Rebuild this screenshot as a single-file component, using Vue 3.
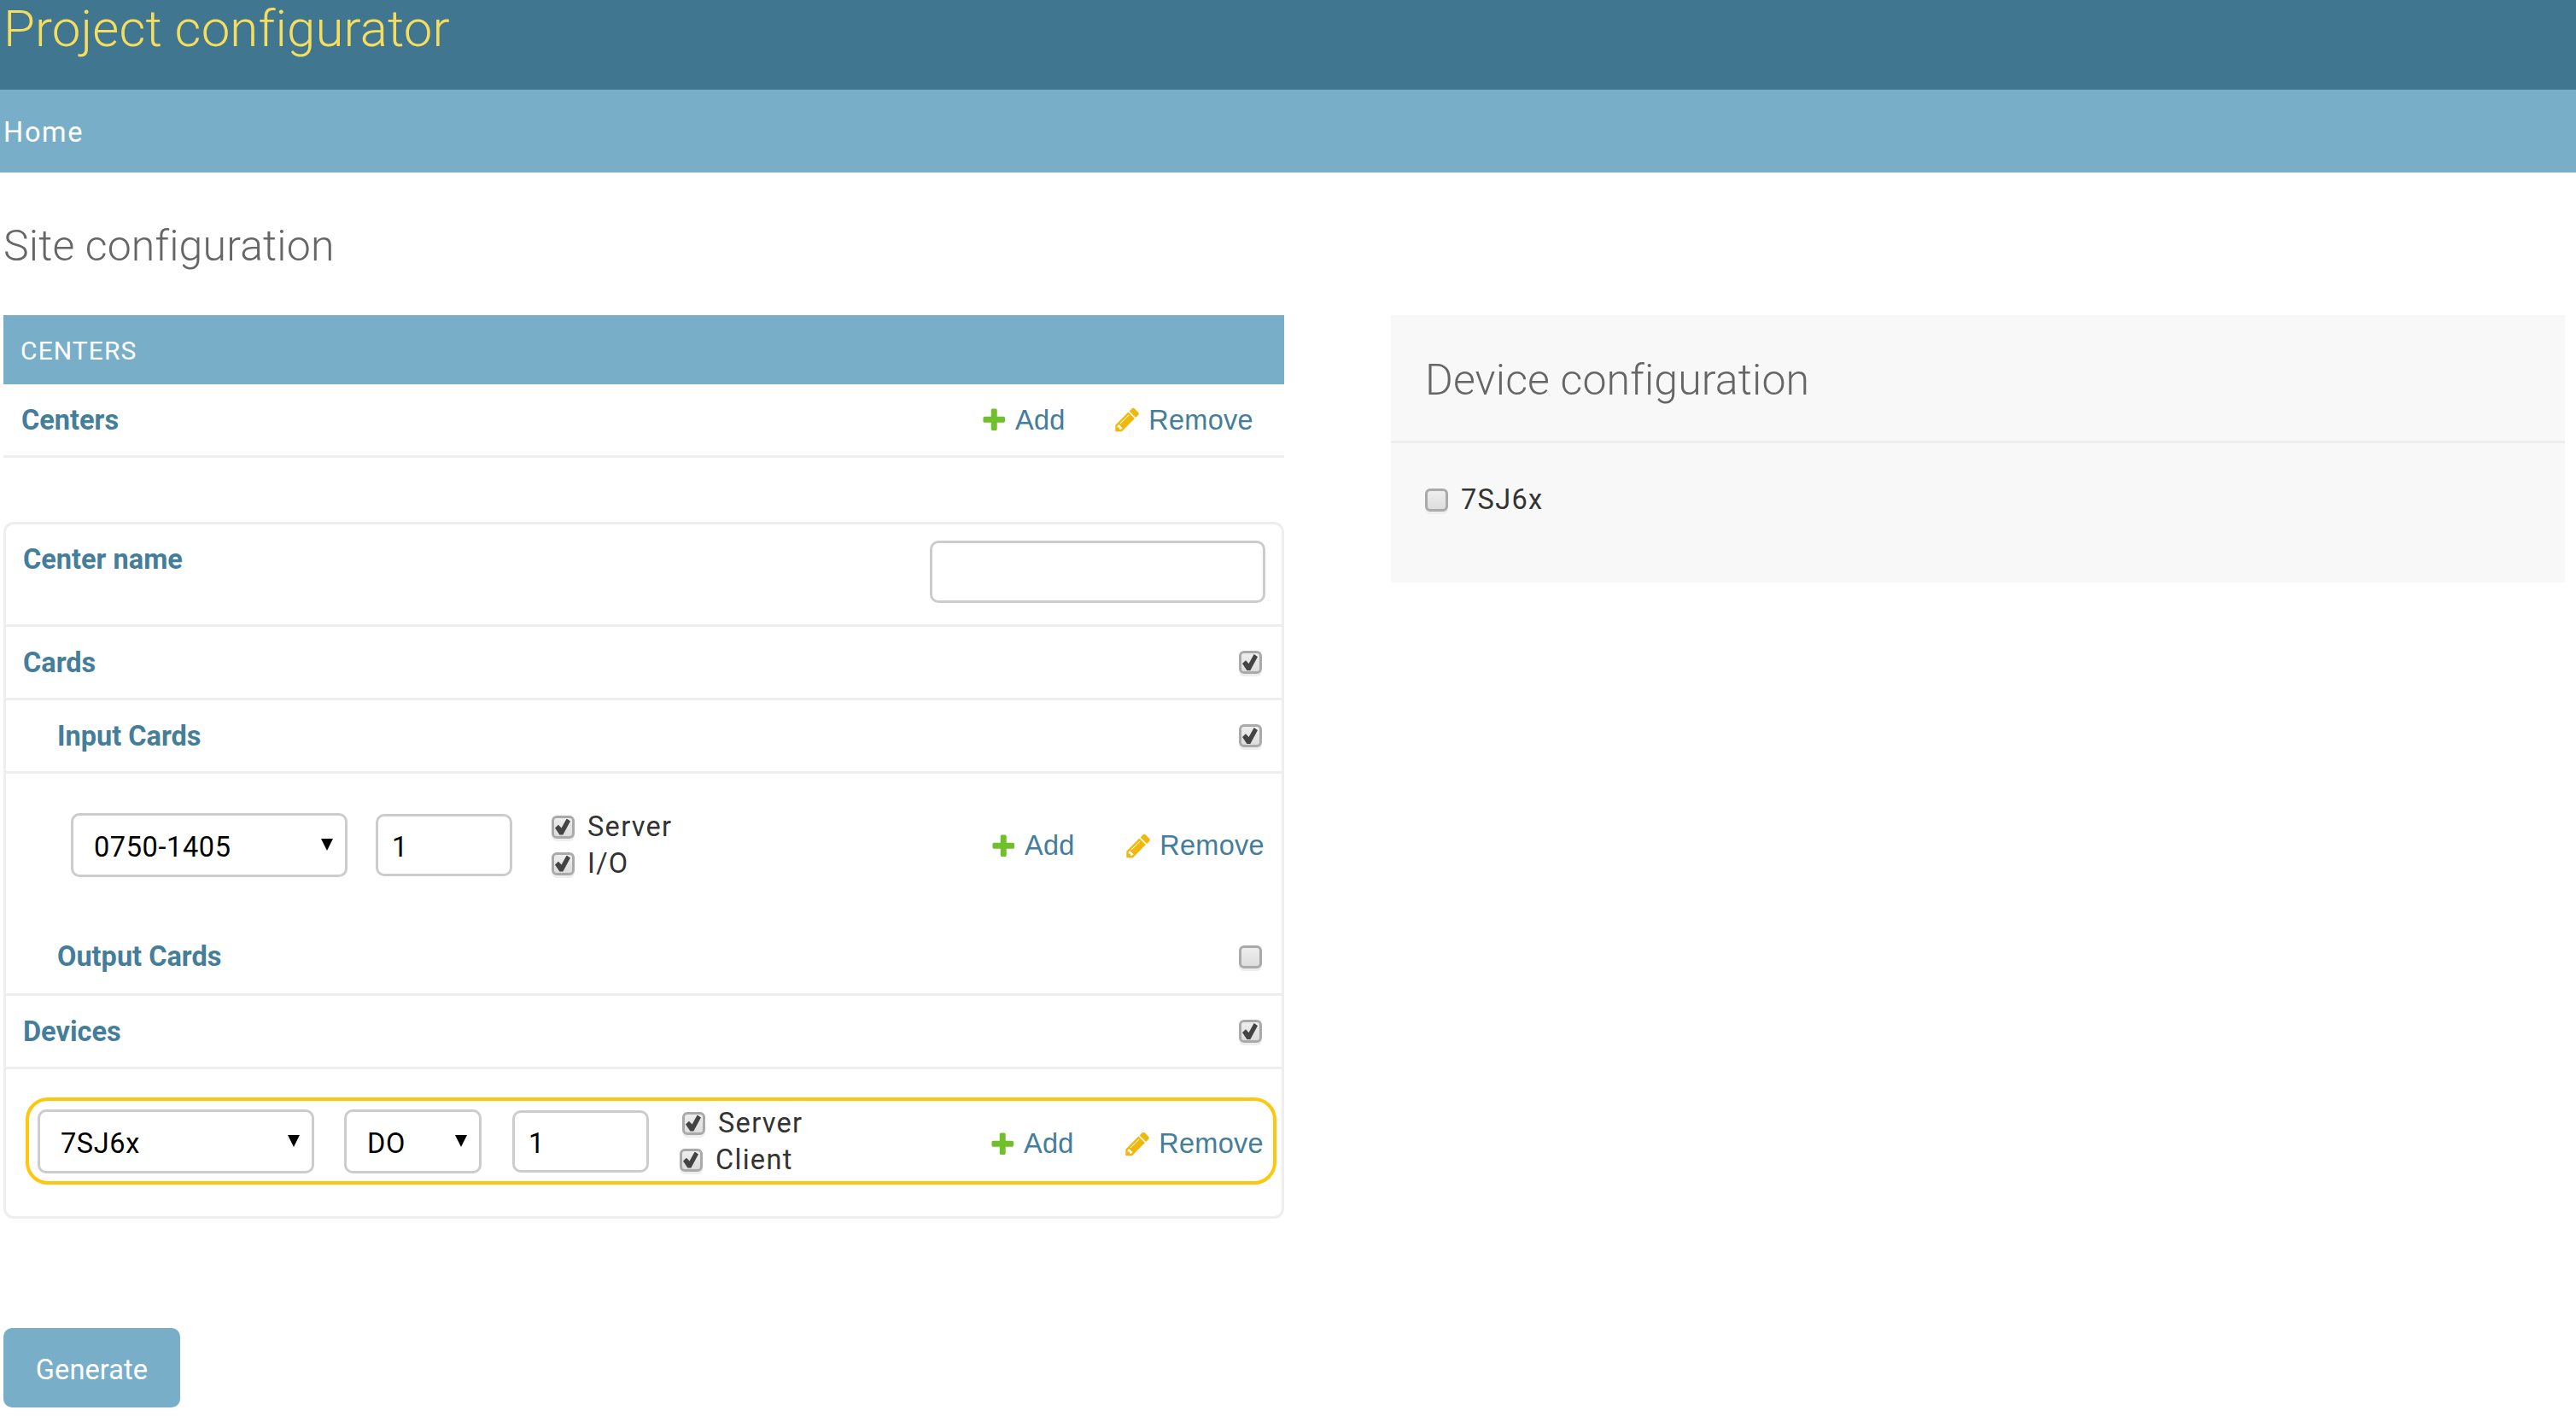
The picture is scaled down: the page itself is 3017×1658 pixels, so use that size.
<script setup>
const plus = 'M1600 796v192q0 40-28 68t-68 28h-416v416q0 40-28 68t-68 28h-192q-40 0-68-28t-28-68v-416h-416q-40 0-68-28t-28-68v-192q0-40 28-68t68-28h416v-416q0-40 28-68t68-28h192q40 0 68 28t28 68v416h416q40 0 68 28t28 68z'
const pencil = 'M491 1536l91-91-235-235-91 91v107h128v128h107zm523-928q0-22-22-22-10 0-17 7l-542 542q-7 7-7 17 0 22 22 22 10 0 17-7l542-542q7-7 7-17zm-54-192l416 416-832 832h-416v-416zm683 96q0 53-37 90l-166 166-416-416 166-165q36-38 90-38 53 0 91 38l235 234q37 39 37 91z'
</script>

<template>
  <div class="page">
    <header class="branding"><h1>Project configurator</h1></header>
    <nav class="crumbs">Home</nav>

    <h1 class="title">Site configuration</h1>

    <div class="columns">
      <form class="site" @submit.prevent>
        <h2 class="caption">CENTERS</h2>
        <div class="centers-row">
          <span class="label">Centers</span>
          <div class="actions">
            <a class="link add"><svg viewBox="0 0 1792 1792"><path fill="#70bf2b" :d="plus" /></svg>Add</a>
            <a class="link change"><svg viewBox="0 0 1792 1792"><path fill="#efb80b" :d="pencil" /></svg>Remove</a>
          </div>
        </div>

        <div class="box">
          <div class="row name-row">
            <label class="label">Center name</label>
            <input class="field name-input" type="text" />
          </div>
          <div class="row">
            <span class="label">Cards</span>
            <input class="check" type="checkbox" checked />
          </div>
          <div class="row sub">
            <span class="label">Input Cards</span>
            <input class="check" type="checkbox" checked />
          </div>
          <div class="card-line">
            <div class="select-wrap card-select">
              <select class="field"><option>0750-1405</option></select>
            </div>
            <input class="field count" type="text" value="1" />
            <div class="options">
              <label class="opt"><input class="check" type="checkbox" checked />Server</label>
              <label class="opt"><input class="check" type="checkbox" checked />I/O</label>
            </div>
            <div class="actions">
              <a class="link add"><svg viewBox="0 0 1792 1792"><path fill="#70bf2b" :d="plus" /></svg>Add</a>
              <a class="link change"><svg viewBox="0 0 1792 1792"><path fill="#efb80b" :d="pencil" /></svg>Remove</a>
            </div>
          </div>
          <div class="row sub output">
            <span class="label">Output Cards</span>
            <input class="check" type="checkbox" />
          </div>
          <div class="row">
            <span class="label">Devices</span>
            <input class="check" type="checkbox" checked />
          </div>
          <div class="device-area">
            <div class="device-line">
              <div class="select-wrap device-select">
                <select class="field"><option>7SJ6x</option></select>
              </div>
              <div class="select-wrap type-select">
                <select class="field"><option>DO</option></select>
              </div>
              <input class="field count" type="text" value="1" />
              <div class="options device-options">
                <label class="opt"><input class="check" type="checkbox" checked />Server</label>
                <label class="opt shifted"><input class="check" type="checkbox" checked />Client</label>
              </div>
              <div class="actions">
                <a class="link add"><svg viewBox="0 0 1792 1792"><path fill="#70bf2b" :d="plus" /></svg>Add</a>
                <a class="link change"><svg viewBox="0 0 1792 1792"><path fill="#efb80b" :d="pencil" /></svg>Remove</a>
              </div>
            </div>
          </div>
        </div>

        <button class="generate" type="submit">Generate</button>
      </form>

      <aside class="panel">
        <h2>Device configuration</h2>
        <label class="opt panel-opt"><input class="check" type="checkbox" />7SJ6x</label>
      </aside>
    </div>
  </div>
</template>

<style>
html, body { background: #fff; }
</style>

<style scoped>
.page {
  width: 3017px;
  height: 1658px;
  overflow: hidden;
  font-family: Roboto, "Liberation Sans", sans-serif;
  font-size: 32.5px;
  color: #333;
}
.branding {
  height: 105px;
  background: #417690;
  padding-left: 4px;
  box-sizing: border-box;
}
.branding h1 {
  margin: 0;
  font-size: 60px;
  line-height: 67px;
  font-weight: 300;
  letter-spacing: 0.1px;
  color: #f5dd5d;
}
.crumbs {
  height: 97px;
  box-sizing: border-box;
  padding: 3px 0 0 4px;
  display: flex;
  align-items: center;
  background: #79aec8;
  color: #fff;
  letter-spacing: 1.7px;
}
.title {
  margin: 56px 0 51px 4px;
  font-size: 50px;
  line-height: 60px;
  font-weight: 300;
  letter-spacing: 0.15px;
  color: #666;
}
.columns {
  display: grid;
  grid-template-columns: 1500px 1375px;
  gap: 125px;
  padding-left: 4px;
}
.caption {
  margin: 0;
  height: 81px;
  box-sizing: border-box;
  padding: 2px 0 0 20px;
  display: flex;
  align-items: center;
  background: #79aec8;
  color: #fff;
  font-size: 30px;
  font-weight: 400;
  letter-spacing: 1.1px;
}
.centers-row {
  height: 86px;
  box-sizing: border-box;
  padding: 0 36px 0 21px;
  display: flex;
  align-items: center;
  justify-content: space-between;
  border-bottom: 3px solid #eee;
}
.label {
  font-weight: 700;
  color: #447e9b;
}
.actions {
  display: flex;
  align-items: center;
  gap: 56px;
  margin-left: auto;
  font-family: "Liberation Sans", Arial, sans-serif;
  letter-spacing: 0.3px;
}
.link {
  display: flex;
  align-items: center;
  gap: 9px;
  color: #447e9b;
  line-height: 40px;
}
.link.add {
  gap: 8px;
}
.link svg {
  width: 32.5px;
  height: 32.5px;
  flex: none;
}
.box {
  margin-top: 75px;
  height: 816px;
  box-sizing: border-box;
  border: 3px solid #eee;
  border-radius: 12px;
}
.row {
  height: 86px;
  box-sizing: border-box;
  padding: 0 23px 0 20px;
  display: flex;
  align-items: center;
  justify-content: space-between;
  border-bottom: 3px solid #eee;
}
.name-row {
  height: 120px;
  align-items: flex-start;
  padding: 19px 19px 0 20px;
}
.name-row .label {
  margin-top: 3px;
}
.sub {
  padding-left: 60px;
}
.field {
  box-sizing: border-box;
  border: 3px solid #ccc;
  border-radius: 10px;
  background: #fff;
  font-family: Roboto, sans-serif;
  font-size: 32.5px;
  letter-spacing: 0.6px;
  color: #000;
  outline: none;
  appearance: none;
}
.name-input {
  width: 393px;
  height: 73px;
}
.card-line {
  height: 171px;
  box-sizing: border-box;
  padding: 46px 20px 0 76px;
  display: flex;
  align-items: flex-start;
}
.card-line .actions,
.device-line .actions {
  gap: 58px;
}
.card-line .actions {
  margin-top: 18px;
}
.select-wrap {
  position: relative;
  flex: none;
}
.select-wrap select {
  width: 100%;
  height: 75px;
  padding: 5px 0 0 24px;
}
.select-wrap::after {
  content: "";
  position: absolute;
  right: 17px;
  top: 30px;
  border-left: 7px solid transparent;
  border-right: 7px solid transparent;
  border-top: 14px solid #000;
}
.card-select {
  width: 324px;
  margin-right: 33px;
}
.count {
  width: 160px;
  height: 73px;
  padding: 5px 0 0 16px;
  margin-top: 1px;
  flex: none;
}
.options {
  margin-left: 46px;
  display: flex;
  flex-direction: column;
  gap: 11px;
}
.opt {
  display: flex;
  align-items: center;
  gap: 15px;
  height: 32px;
  color: #333;
  letter-spacing: 1.3px;
}
.check {
  appearance: none;
  box-sizing: border-box;
  position: relative;
  flex: none;
  width: 27px;
  height: 27px;
  margin: 0;
  border: 3px solid #aaa;
  border-radius: 6px;
  background: linear-gradient(#eee, #ddd);
  box-shadow: 0 3px 0 #eee;
}
.check:checked::before {
  content: "";
  position: absolute;
  left: 1px;
  top: 1px;
  width: 18px;
  height: 19px;
  background: #444;
  clip-path: polygon(0 58%, 22% 38%, 42% 58%, 76% 0, 100% 16%, 52% 100%, 30% 100%);
}
.output {
  height: 89px;
}
.device-area {
  padding: 33px 6px 0 23px;
}
.device-line {
  height: 102px;
  box-sizing: border-box;
  border: 4px solid #fdc60f;
  border-radius: 26px;
  padding: 10px 11px 0 10px;
  display: flex;
  align-items: flex-start;
}
.device-select {
  width: 324px;
  margin-right: 35px;
}
.type-select {
  width: 161px;
  margin-right: 36px;
}
.device-options {
  margin: 0 0 0 39px;
}
.shifted {
  margin-left: -3px;
}
.device-line .actions {
  margin-top: 20px;
}
.generate {
  display: block;
  margin-top: 128px;
  width: 207px;
  height: 93px;
  padding: 4px 0 0;
  border: none;
  border-radius: 10px;
  background: #79aec8;
  color: #fff;
  font-family: Roboto, sans-serif;
  font-size: 32.5px;
  letter-spacing: 0.1px;
}
.panel {
  height: 313px;
  background: #f8f8f8;
}
.panel h2 {
  margin: 0;
  height: 150px;
  box-sizing: border-box;
  padding: 46px 0 0 40px;
  font-size: 50px;
  line-height: 60px;
  font-weight: 300;
  letter-spacing: 0.15px;
  color: #666;
  border-bottom: 3px solid #eee;
}
.panel-opt {
  margin: 50px 0 0 40px;
}
</style>
